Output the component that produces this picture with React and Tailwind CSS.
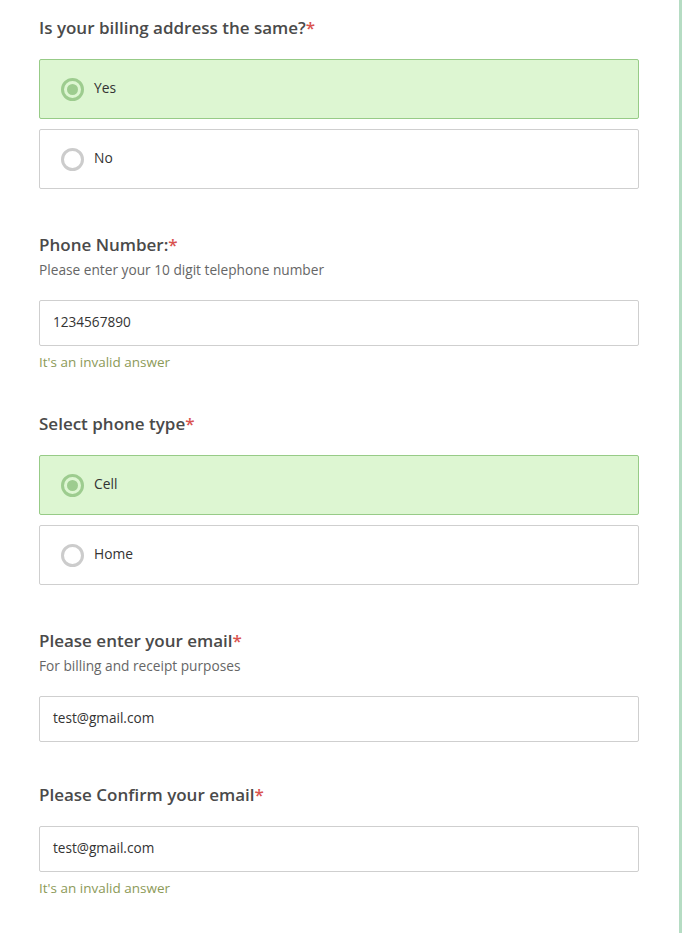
import React from "react";

function Label({ children, sub }) {
  return (
    <div className={sub ? "mb-[21px]" : "mb-[19px]"}>
      <h3 className="text-[17px] font-semibold leading-[24px] text-[#4a4a4a]">
        {children}
        <span className="text-[#d9534f]">*</span>
      </h3>
      {sub && (
        <p className="mt-[4px] text-[13.7px] leading-[18px] text-[#666]">{sub}</p>
      )}
    </div>
  );
}

function Radio({ label, checked }) {
  return (
    <div
      className={`flex h-[60px] items-center rounded-[2px] border px-[21px] ${
        checked ? "border-[#97cb87] bg-[#ddf6d2]" : "border-[#cfcfcf] bg-white"
      }`}
    >
      <span
        className={`flex h-[23px] w-[23px] items-center justify-center rounded-full border-[3px] ${
          checked ? "border-[#9dcc8f]" : "border-[#cccccc]"
        }`}
      >
        {checked && <span className="h-[11px] w-[11px] rounded-full bg-[#9dcc8f]" />}
      </span>
      <span className="ml-[10px] pb-[2px] text-[13.8px] text-[#333]">{label}</span>
    </div>
  );
}

function Input({ value }) {
  return (
    <div className="flex h-[46px] items-center rounded-[2px] border border-[#cfcfcf] bg-white px-[13px] pb-[2px] text-[13.6px] text-[#333]">
      {value}
    </div>
  );
}

function Error() {
  return <p className="mt-[6px] text-[13.5px] leading-[20px] text-[#8c9a58]">It's an invalid answer</p>;
}

export default function App() {
  return (
    <div className="flex min-h-[933px] bg-white font-['Open_Sans','Lato',sans-serif]">
      <div className="w-[679px] pl-[39px] pr-[40px] pt-[16px]">
        {/* Billing */}
        <Label>Is your billing address the same?</Label>
        <div className="flex flex-col gap-[10px]">
          <Radio label="Yes" checked />
          <Radio label="No" />
        </div>

        {/* Phone */}
        <div className="mt-[44px]">
          <Label sub="Please enter your 10 digit telephone number">Phone Number:</Label>
          <Input value="1234567890" />
          <Error />
        </div>

        {/* Phone type */}
        <div className="mt-[40px]">
          <Label>Select phone type</Label>
          <div className="flex flex-col gap-[10px]">
            <Radio label="Cell" checked />
            <Radio label="Home" />
          </div>
        </div>

        {/* Email */}
        <div className="mt-[44px]">
          <Label sub="For billing and receipt purposes">Please enter your email</Label>
          <Input value="test@gmail.com" />
        </div>

        <div className="mt-[41px]">
          <Label>Please Confirm your email</Label>
          <Input value="test@gmail.com" />
          <Error />
        </div>
      </div>
      <div className="w-[3px] bg-[#b5dcc3]" />
    </div>
  );
}
